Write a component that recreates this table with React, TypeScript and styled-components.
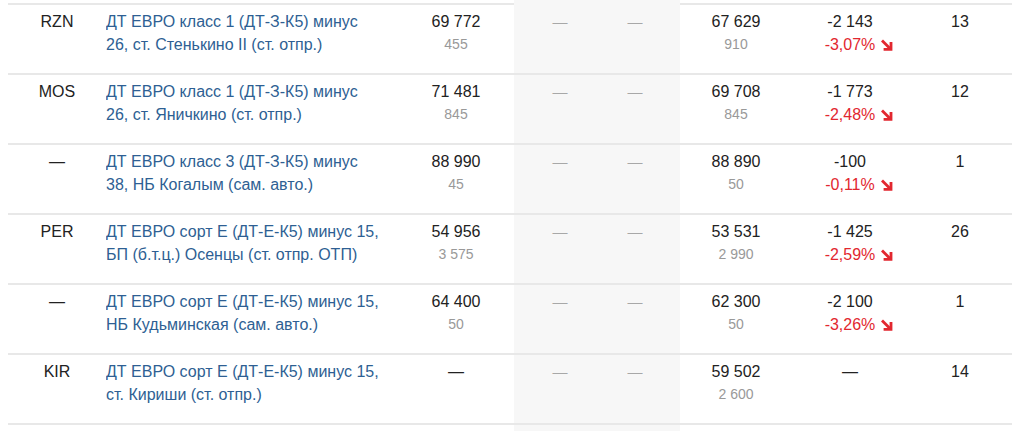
import styled, { createGlobalStyle } from 'styled-components'

const GlobalStyle = createGlobalStyle`
  html, body {
    margin: 0;
    padding: 0;
    background: #fff;
  }
  body {
    padding: 0 8px;
    font-family: "Liberation Sans", Arial, sans-serif;
    color: #222;
  }
`

const Table = styled.div`
  width: 1004px;
`

const Row = styled.div<{ $height?: number; $last?: boolean }>`
  display: grid;
  grid-template-columns: 98px 292px 116px 83px 83px 112px 116px 104px;
  height: ${p => (p.$height !== undefined ? p.$height : 68)}px;
  border-bottom: ${p => (p.$last ? 'none' : '2px solid #e8e8e8')};
`

const Cell = styled.div<{ $shaded?: boolean; $shift?: number }>`
  padding-top: 5px;
  text-align: center;
  font-size: 16px;
  line-height: 23px;
  color: #222;
  background: ${p => (p.$shaded ? '#f7f7f7' : 'transparent')};
  padding-left: ${p => (p.$shift && p.$shift > 0 ? p.$shift : 0)}px;
  padding-right: ${p => (p.$shift && p.$shift < 0 ? -p.$shift : 0)}px;
  overflow: hidden;
`

const NameCell = styled(Cell)`
  text-align: left;

  & a {
    color: #2e5f93;
    text-decoration: none;

    &:hover {
      text-decoration: underline;
    }
  }
`

const Sub = styled.div`
  font-size: 14px;
  line-height: 23px;
  color: #999;
`

const Muted = styled.span`
  font-size: 15px;
  color: #a8a8a8;
`

const Percent = styled.div`
  color: #e2272f;
  white-space: nowrap;

  & svg {
    display: inline-block;
    margin-left: 5px;
    margin-right: -18px;
    vertical-align: -1px;
  }
`

const DownArrow = () => (
  <svg width="13" height="12" viewBox="0 0 13 12" fill="none">
    <path d="M2 1.5 L10 9.5" stroke="#e2272f" strokeWidth="2.8" />
    <path d="M11 3 V10.4 H3.6" stroke="#e2272f" strokeWidth="2.8" />
  </svg>
)

type Item = {
  code: string
  name: [string, string]
  price?: [string, string]
  last: [string, string]
  change?: [string, string]
  count: string
}

const items: Item[] = [
  {
    code: 'RZN',
    name: ['ДТ ЕВРО класс 1 (ДТ-З-К5) минус', '26, ст. Стенькино II (ст. отпр.)'],
    price: ['69 772', '455'],
    last: ['67 629', '910'],
    change: ['-2 143', '-3,07%'],
    count: '13',
  },
  {
    code: 'MOS',
    name: ['ДТ ЕВРО класс 1 (ДТ-З-К5) минус', '26, ст. Яничкино (ст. отпр.)'],
    price: ['71 481', '845'],
    last: ['69 708', '845'],
    change: ['-1 773', '-2,48%'],
    count: '12',
  },
  {
    code: '—',
    name: ['ДТ ЕВРО класс 3 (ДТ-З-К5) минус', '38, НБ Когалым (сам. авто.)'],
    price: ['88 990', '45'],
    last: ['88 890', '50'],
    change: ['-100', '-0,11%'],
    count: '1',
  },
  {
    code: 'PER',
    name: ['ДТ ЕВРО сорт Е (ДТ-Е-К5) минус 15,', 'БП (б.т.ц.) Осенцы (ст. отпр. ОТП)'],
    price: ['54 956', '3 575'],
    last: ['53 531', '2 990'],
    change: ['-1 425', '-2,59%'],
    count: '26',
  },
  {
    code: '—',
    name: ['ДТ ЕВРО сорт Е (ДТ-Е-К5) минус 15,', 'НБ Кудьминская (сам. авто.)'],
    price: ['64 400', '50'],
    last: ['62 300', '50'],
    change: ['-2 100', '-3,26%'],
    count: '1',
  },
  {
    code: 'KIR',
    name: ['ДТ ЕВРО сорт Е (ДТ-Е-К5) минус 15,', 'ст. Кириши (ст. отпр.)'],
    last: ['59 502', '2 600'],
    count: '14',
  },
]

const EdgeRow = ({ height, last }: { height: number; last?: boolean }) => (
  <Row $height={height} $last={last}>
    <div />
    <div />
    <div />
    <Cell $shaded />
    <Cell $shaded />
    <div />
    <div />
    <div />
  </Row>
)

const App = () => {
  return (
    <>
      <GlobalStyle />
      <Table>
        <EdgeRow height={3} />
        {items.map((it, i) => (
          <Row key={i}>
            <Cell>{it.code}</Cell>
            <NameCell>
              <a href="#">
                {it.name[0]}
                <br />
                {it.name[1]}
              </a>
            </NameCell>
            <Cell>
              {it.price ? (
                <>
                  {it.price[0]}
                  <Sub>{it.price[1]}</Sub>
                </>
              ) : (
                '—'
              )}
            </Cell>
            <Cell $shaded $shift={9}>
              <Muted>—</Muted>
            </Cell>
            <Cell $shaded $shift={-7}>
              <Muted>—</Muted>
            </Cell>
            <Cell>
              {it.last[0]}
              <Sub>{it.last[1]}</Sub>
            </Cell>
            <Cell>
              {it.change ? (
                <>
                  {it.change[0]}
                  <Percent>
                    {it.change[1]}
                    <DownArrow />
                  </Percent>
                </>
              ) : (
                '—'
              )}
            </Cell>
            <Cell>{it.count}</Cell>
          </Row>
        ))}
        <EdgeRow height={8} last />
      </Table>
    </>
  )
}

export default App
